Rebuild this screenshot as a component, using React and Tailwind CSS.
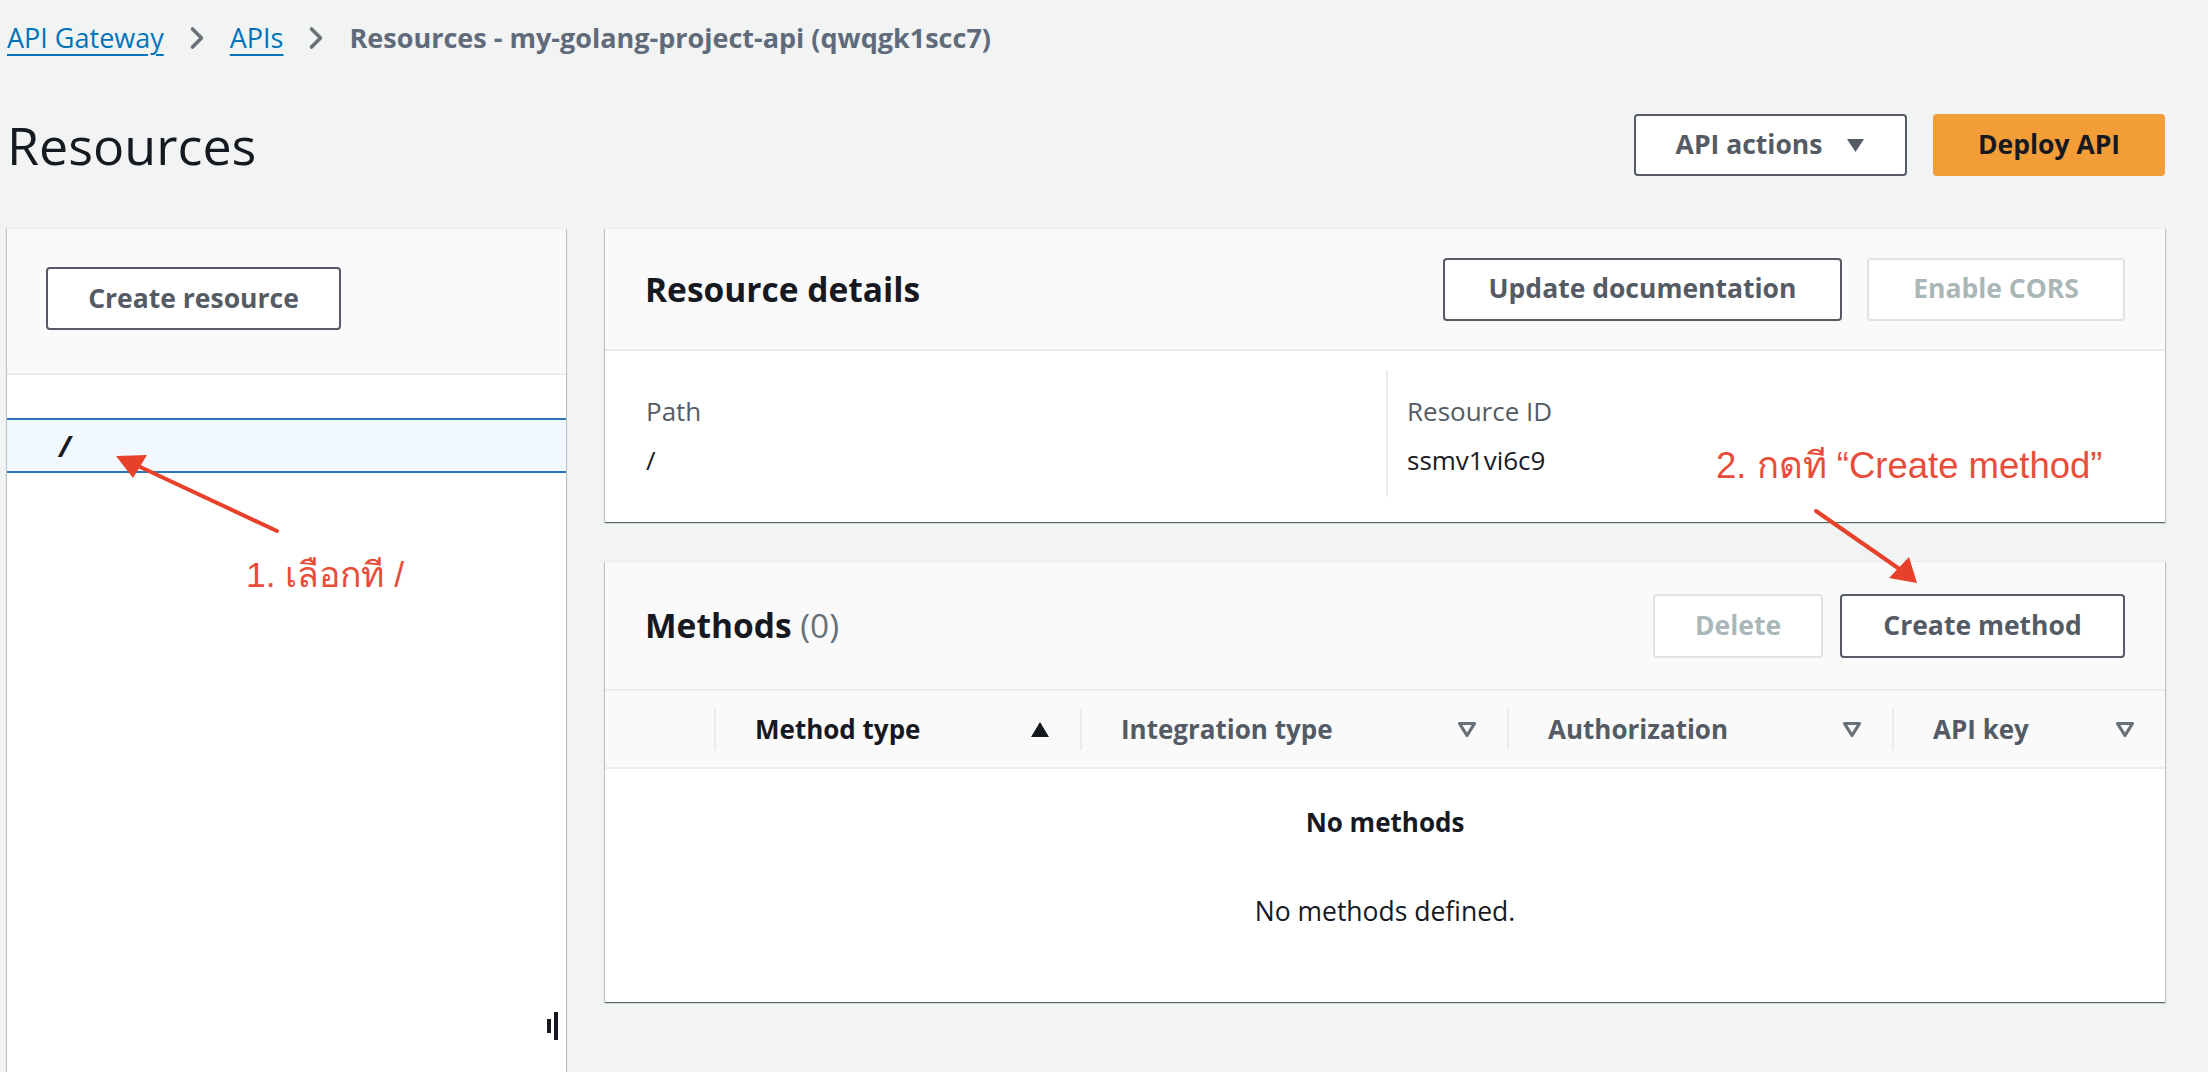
import { ChevronRight } from "lucide-react";

const SortUp = () => (
  <svg width="20" height="17" viewBox="0 0 20 17">
    <path d="M10 1 L19 16 H1 Z" fill="#16191f" />
  </svg>
);

const SortNone = () => (
  <svg width="20" height="17" viewBox="0 0 20 17">
    <path d="M2.5 2.5 H17.5 L10 14.5 Z" fill="none" stroke="#687078" strokeWidth="3.2" strokeLinejoin="round" />
  </svg>
);

const Btn = ({ children, disabled, className = "" }) => (
  <button
    className={
      "h-[63px] rounded-[4px] border-2 bg-white text-[26.5px] font-bold flex items-center justify-center " +
      (disabled ? "border-[#dfe3e3] text-[#aab7b8] " : "border-[#545b64] text-[#545b64] ") +
      className
    }
  >
    {children}
  </button>
);

const HeadCell = ({ label, active, divider = true }) => (
  <div className="flex items-center h-full">
    {divider && <div className="w-[2px] h-[42px] bg-[#eaeded]" />}
    <div className="flex-1 flex items-center justify-between pl-[39px] pr-[30px]">
      <span className={"text-[26px] font-bold " + (active ? "text-[#16191f]" : "text-[#545b64]")}>{label}</span>
      {active ? <SortUp /> : <SortNone />}
    </div>
  </div>
);

const cardShadow =
  "shadow-[0_1px_1px_0_rgba(0,28,36,0.5),1px_1px_1px_0_rgba(0,28,36,0.15),-1px_1px_1px_0_rgba(0,28,36,0.15)]";

export default function App() {
  return (
    <div className="relative w-[2208px] h-[1072px] overflow-hidden bg-[#f2f3f3] font-['Open_Sans',sans-serif] text-[#16191f]">
      <div className="pl-[7px] pr-[43px]">
        {/* breadcrumbs */}
        <div className="h-[76px] flex items-center text-[27px]">
          <a className="text-[#0073bb] underline decoration-2 underline-offset-[6px]">API Gateway</a>
          <ChevronRight className="mx-[15px] text-[#687078]" size={36} strokeWidth={2.4} />
          <a className="text-[#0073bb] underline decoration-2 underline-offset-[6px]">APIs</a>
          <ChevronRight className="mx-[15px] text-[#687078]" size={36} strokeWidth={2.4} />
          <span className="font-bold text-[#5f6b7a] text-[27px]">Resources - my-golang-project-api (qwqgk1scc7)</span>
        </div>

        {/* title row */}
        <div className="h-[138px] flex items-center justify-between">
          <h1 className="text-[52px] leading-none font-normal">Resources</h1>
          <div className="flex items-center gap-[26px]">
            <button className="h-[62px] w-[273px] rounded-[4px] border-2 border-[#545b64] bg-white text-[#545b64] text-[26.5px] font-bold flex items-center justify-center gap-[24px]">
              API actions
              <svg width="19" height="15" viewBox="0 0 19 15">
                <path d="M1 1 H18 L9.5 14 Z" fill="#545b64" />
              </svg>
            </button>
            <button className="h-[62px] w-[232px] rounded-[4px] bg-[#f29d38] text-[#16191f] text-[26.5px] font-bold">
              Deploy API
            </button>
          </div>
        </div>

        {/* main area */}
        <div className="mt-[14px] flex items-start gap-[39px]">
          {/* resource tree panel */}
          <div className={"relative w-[559px] h-[850px] bg-white border-t border-[#eaeded] " + cardShadow}>
            <div className="h-[146px] bg-[#fafafa] border-b-2 border-[#eaeded] pt-[38px] pl-[39px]">
              <Btn className="w-[295px]">Create resource</Btn>
            </div>
            <div className="mt-[43px] h-[55px] bg-[#f1f8ff] border-y-2 border-[#2f73b7] flex items-center pl-[52px]">
              <span className="text-[28px] font-bold italic">/</span>
            </div>
            <div className="absolute left-[540px] top-[783px] flex items-center gap-[3px]">
              <div className="w-[4px] h-[14px] bg-[#16191f]" />
              <div className="w-[4px] h-[28px] bg-[#16191f]" />
            </div>
          </div>

          {/* right column */}
          <div className="flex-1 flex flex-col gap-[39px]">
            {/* resource details */}
            <div className={"bg-white border-t border-[#eaeded] " + cardShadow}>
              <div className="h-[122px] bg-[#fafafa] border-b-2 border-[#eaeded] px-[40px] flex items-center justify-between">
                <h2 className="text-[33.5px] font-bold">Resource details</h2>
                <div className="flex items-center gap-[25px]">
                  <Btn className="w-[399px]">Update documentation</Btn>
                  <Btn className="w-[258px]" disabled>
                    Enable CORS
                  </Btn>
                </div>
              </div>
              <div className="flex pt-[19px] pb-[25px]">
                <div className="w-[781px] pl-[41px] pt-[23px] pb-[19px]">
                  <div className="text-[26px] leading-[36px] text-[#545b64]">Path</div>
                  <div className="mt-[13px] text-[26px] leading-[36px]">/</div>
                </div>
                <div className="flex-1 border-l-2 border-[#eaeded] pl-[19px] pt-[23px] pb-[19px]">
                  <div className="text-[26px] leading-[36px] text-[#545b64]">Resource ID</div>
                  <div className="mt-[13px] text-[26px] leading-[36px]">ssmv1vi6c9</div>
                </div>
              </div>
            </div>

            {/* methods */}
            <div className={"bg-white border-t border-[#eaeded] " + cardShadow}>
              <div className="h-[127px] bg-[#fafafa] px-[40px] flex items-center justify-between">
                <h2 className="text-[33.5px] font-bold">
                  Methods <span className="font-normal text-[#687078]">(0)</span>
                </h2>
                <div className="flex items-center gap-[17px]">
                  <Btn className="w-[170px] h-[64px]" disabled>
                    Delete
                  </Btn>
                  <Btn className="w-[285px] h-[64px]">Create method</Btn>
                </div>
              </div>
              <div className="h-[80px] bg-[#fafafa] border-y-2 border-[#eaeded] grid grid-cols-[109px_366px_427px_385px_1fr]">
                <div />
                <HeadCell label="Method type" active />
                <HeadCell label="Integration type" />
                <HeadCell label="Authorization" />
                <HeadCell label="API key" />
              </div>
              <div className="h-[233px] flex flex-col items-center pt-[35px]">
                <div className="text-[26px] leading-[36px] font-bold">No methods</div>
                <div className="mt-[53px] text-[26.5px] leading-[36px]">No methods defined.</div>
              </div>
            </div>
          </div>
        </div>
      </div>

      {/* tutorial annotations */}
      <svg className="absolute inset-0 pointer-events-none" width="2208" height="1072">
        <line x1="277" y1="531" x2="136" y2="465" stroke="#e8412a" strokeWidth="4" strokeLinecap="round" />
        <polygon points="116,456 147,455 133,478" fill="#e8412a" />
        <line x1="1816" y1="511" x2="1898" y2="568" stroke="#e8412a" strokeWidth="4" strokeLinecap="round" />
        <polygon points="1917,583 1889,578 1909,557" fill="#e8412a" />
      </svg>
      <div className="absolute left-[246px] top-[553px] text-[35.5px] leading-[44px] text-[#ea4c3a] font-['Liberation_Sans',sans-serif]">
        1. เลือกที /
      </div>
      <div className="absolute left-[1716px] top-[444px] text-[36.5px] leading-[44px] text-[#ea4c3a] font-['Liberation_Sans',sans-serif]">
        2. กดที “Create method”
      </div>
    </div>
  );
}
